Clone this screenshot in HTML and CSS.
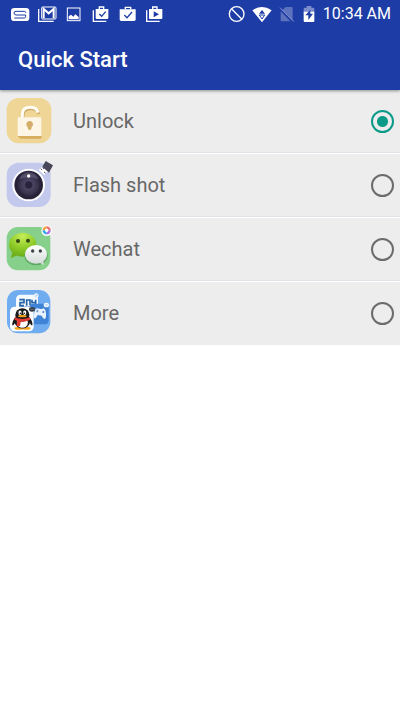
FILE: index.html
```html
<!DOCTYPE html>
<html lang="en">
<head>
    <meta charset="UTF-8">
    <meta name="viewport" content="width=device-width, initial-scale=1.0">
    <title>Quick Start</title>
    <link rel="stylesheet" href="styles.css">
</head>
<body>
    <header class="app-header">
        <!-- Status bar -->
        <div class="status-bar">
            <div class="notifications">
                <svg width="20" height="18" viewBox="0 0 60 54" fill="none">
                    <rect x="3" y="9" width="55" height="39" rx="10" fill="#fff"/>
                    <path d="M47 24v-1q0-4-4-4H18q-6 0-6 5t6 6h29v4q0 5-4 5H13" stroke="#1d3ca6" stroke-width="3"/>
                </svg>
                <svg width="20" height="18" viewBox="0 0 60 54" fill="none" stroke="#fff">
                    <path d="M5 12v37h45" stroke-width="4"/>
                    <rect x="14" y="6" width="43" height="36" rx="3" stroke-width="3"/>
                    <path d="M20 40V12l15 13 15-13v28" stroke-width="6"/>
                </svg>
                <svg width="20" height="18" viewBox="0 0 60 54" fill="none">
                    <rect x="10" y="9" width="38" height="38" stroke="#fff" stroke-width="3"/>
                    <path d="M14 43V34l7-5 7 6 6-7 10 8v7z" fill="#fff"/>
                </svg>
                <svg width="20" height="18" viewBox="0 0 60 54" fill="none">
                    <path d="M7 16v33h39" stroke="#fff" stroke-width="4"/>
                    <path d="M25 13V6h13v7" stroke="#fff" stroke-width="4"/>
                    <path d="M14 12h38v27q0 3-3 3H17q-3 0-3-3z" fill="#fff"/>
                    <path d="M25 27l7 7 12-14" stroke="#1d3ca6" stroke-width="4"/>
                </svg>
                <svg width="20" height="18" viewBox="0 0 60 54" fill="none">
                    <path d="M22 13V7h16v6" stroke="#fff" stroke-width="4"/>
                    <path d="M5 13h48v30q0 5-5 5H10q-5 0-5-5z" fill="#fff"/>
                    <path d="M19 30l8 8 15-17" stroke="#1d3ca6" stroke-width="4"/>
                </svg>
                <svg width="20" height="18" viewBox="0 0 60 54" fill="none">
                    <path d="M5 16v33h39" stroke="#fff" stroke-width="4"/>
                    <path d="M23 13V6h13v7" stroke="#fff" stroke-width="4"/>
                    <path d="M12 12h40v27q0 3-3 3H15q-3 0-3-3z" fill="#fff"/>
                    <path d="M26 19l16 9-16 9z" fill="#1d3ca6"/>
                </svg>
            </div>
            <div class="system">
                <svg width="18" height="18" viewBox="0 0 54 54" fill="none" stroke="#fff" stroke-width="4">
                    <circle cx="29" cy="27" r="22"/>
                    <path d="M14 12l30 30"/>
                </svg>
                <svg width="20" height="18" viewBox="0 0 60 54">
                    <path d="M1 16Q30-4 59 16L30 52z" fill="#fff"/>
                    <path d="M30 15l9 11H21z" fill="#1d3ca6"/>
                    <path d="M22 30h16l-8 12z" fill="#fff" stroke="#1d3ca6" stroke-width="3"/>
                </svg>
                <svg width="16" height="18" viewBox="0 0 48 54">
                    <path d="M5 12l36 37V9q0-3-3-3H20l-9 8zM5 19v27q0 3 3 3h26z" fill="#5d72be"/>
                    <path d="M3 8l42 42" stroke="#8090cc" stroke-width="3"/>
                </svg>
                <svg width="14" height="18" viewBox="0 0 42 54">
                    <path d="M14 3h14v5h6q3 0 3 3v12H5V11q0-3 3-3h6z" fill="#7d8ccb"/>
                    <path d="M5 20h32v28q0 3-3 3H8q-3 0-3-3z" fill="#fff"/>
                    <path d="M25 14L10 31h9v14l14-19h-8z" fill="#1d3ca6"/>
                </svg>
                <span class="clock">10:34 AM</span>
            </div>
        </div>
        <h1 class="title">Quick Start</h1>
    </header>

    <form class="options">
        <label class="option">
            <!-- open padlock -->
            <svg class="option-icon" viewBox="0 0 180 186" aria-hidden="true">
                <rect x="20" y="24" width="134" height="136" rx="36" fill="#efd596"/>
                <path d="M53 138l8 8h62l3-8z" fill="#d7ad60"/>
                <path d="M67 86V72q0-20 25-20 18 0 22 16" fill="none" stroke="#cfab68" stroke-width="9" transform="translate(2 4)"/>
                <path d="M67 86V72q0-20 25-20 18 0 22 16" fill="none" stroke="#fffdf5" stroke-width="9"/>
                <rect x="53" y="82" width="71" height="56" rx="3" fill="#fdf6e6"/>
                <path d="M83 111a10 10 0 1 1 12 0l-2 8h-8z" fill="#d5ad68"/>
            </svg>
            <span class="option-name">Unlock</span>
            <input type="radio" name="action" value="unlock" checked>
        </label>
        <label class="option">
            <!-- camera lens with flash -->
            <svg class="option-icon" viewBox="0 6 180 186" aria-hidden="true">
                <defs>
                    <radialGradient id="lens">
                        <stop offset="0" stop-color="#29243d"/>
                        <stop offset="0.22" stop-color="#29243d"/>
                        <stop offset="0.3" stop-color="#4c4562"/>
                        <stop offset="0.6" stop-color="#3c3550"/>
                        <stop offset="0.85" stop-color="#252034"/>
                        <stop offset="1" stop-color="#2c2740"/>
                    </radialGradient>
                </defs>
                <rect x="20" y="32" width="132" height="133" rx="36" fill="#c3c8ed"/>
                <circle cx="86" cy="99" r="49" fill="#fff"/>
                <circle cx="86" cy="99" r="43" fill="url(#lens)"/>
                <path d="M57 82q8-20 28-21 22 0 31 21-28-13-59 0z" fill="#8a84a4" opacity="0.4"/>
                <circle cx="86" cy="72" r="5" fill="#fff"/>
                <path d="M128 43l17 14-12 12-17-16z" fill="#fff"/>
                <path d="M122 50l4 4m2-8l4 5m0 9l5 4" stroke="#4c4b65" stroke-width="3"/>
                <path d="M137 27l22 13-12 22-20-18z" fill="#48475a"/>
            </svg>
            <span class="option-name">Flash shot</span>
            <input type="radio" name="action" value="flash-shot">
        </label>
        <label class="option">
            <!-- chat bubbles -->
            <svg class="option-icon" viewBox="0 6 180 186" aria-hidden="true">
                <defs>
                    <radialGradient id="green-bubble" cx="0.5" cy="0.15" r="0.9">
                        <stop offset="0" stop-color="#c5ed5a"/>
                        <stop offset="0.55" stop-color="#8ecb27"/>
                        <stop offset="1" stop-color="#67a916"/>
                    </radialGradient>
                    <linearGradient id="white-bubble" x2="0" y2="1">
                        <stop offset="0" stop-color="#fff"/>
                        <stop offset="1" stop-color="#d6dbda"/>
                    </linearGradient>
                </defs>
                <rect x="20" y="33" width="131" height="130" rx="34" fill="#86d08b"/>
                <path d="M37 110l-5 17 20-9z" fill="#6fae1c"/>
                <ellipse cx="68" cy="86" rx="41" ry="36" fill="url(#green-bubble)"/>
                <ellipse cx="108" cy="119" rx="35" ry="29" fill="#5fa863"/>
                <path d="M117 139l15 9-3-17z" fill="#d6dbda"/>
                <ellipse cx="108" cy="115" rx="33" ry="28" fill="url(#white-bubble)"/>
                <circle cx="54" cy="75" r="6" fill="#334616"/>
                <circle cx="84" cy="74" r="6" fill="#334616"/>
                <circle cx="98" cy="105" r="5" fill="#3d4444"/>
                <circle cx="121" cy="105" r="5" fill="#3d4444"/>
                <circle cx="140" cy="44" r="16" fill="#fff"/>
                <g fill="none" stroke-width="7">
                    <path d="M131 43a9 9 0 0 1 9-9" stroke="#f1a33b"/>
                    <path d="M140 34a9 9 0 0 1 9 9" stroke="#ee6a74"/>
                    <path d="M149 43a9 9 0 0 1-9 9" stroke="#b46de0"/>
                    <path d="M140 52a9 9 0 0 1-9-9" stroke="#35a6ee"/>
                </g>
            </svg>
            <span class="option-name">Wechat</span>
            <input type="radio" name="action" value="wechat">
        </label>
        <label class="option">
            <!-- stack of app tiles -->
            <svg class="option-icon" viewBox="0 4 180 186" aria-hidden="true">
                <rect x="21" y="28" width="130" height="130" rx="34" fill="#70adf0"/>
                <rect x="48" y="42" width="66" height="58" rx="13" fill="#f5faff"/>
                <path d="M58 57h14v9H60v9h12m8 0V58h10v16m6-17v9h11v-9m0 9v11H96M58 80h48" fill="none" stroke="#2463a5" stroke-width="5"/>
                <circle cx="109" cy="45" r="7" fill="#eaf5ff"/>
                <path d="M105 48l8-6" stroke="#7caee0" stroke-width="2"/>
                <rect x="88" y="69" width="58" height="62" rx="12" fill="#3e83d5"/>
                <path d="M106 86q5-6 12-2 8 3 13-1 6 3 7 15 1 16-4 17-5 0-9-10l-12-2q-6 12-10 10-5-5 3-27z" fill="#e8f3ff"/>
                <path d="M112 87v8m-4-4h8" stroke="#4c79b6" stroke-width="2"/>
                <circle cx="130" cy="94" r="3" fill="#4c79b6"/>
                <ellipse cx="139" cy="73" rx="8" ry="7" fill="#f1f8ff"/>
                <path d="M135 73h8" stroke="#7caee0" stroke-width="2"/>
                <rect x="30" y="78" width="71" height="74" rx="14" fill="#fff"/>
                <ellipse cx="96" cy="86" rx="9" ry="7" fill="#343b44"/>
                <path d="M91 86h10" stroke="#8a939c" stroke-width="2"/>
                <g transform="translate(-12 -19) scale(1.18 1.13)">
                    <path d="M50 113q-11 12-8 23 3 0 7-8m35-15q11 12 8 23-3 0-7-8" fill="#191919"/>
                    <ellipse cx="58" cy="143" rx="11" ry="4" fill="#f3a51e"/>
                    <ellipse cx="77" cy="143" rx="11" ry="4" fill="#f3a51e"/>
                    <ellipse cx="67" cy="124" rx="20" ry="20" fill="#191919"/>
                    <ellipse cx="67" cy="128" rx="14" ry="14" fill="#fff"/>
                    <ellipse cx="67" cy="108" rx="18" ry="18" fill="#191919"/>
                    <ellipse cx="61" cy="102" rx="4" ry="6" fill="#fff"/>
                    <ellipse cx="73" cy="102" rx="4" ry="6" fill="#fff"/>
                    <circle cx="62" cy="103" r="2" fill="#111"/>
                    <circle cx="72" cy="103" r="2" fill="#111"/>
                    <ellipse cx="67" cy="111" rx="11" ry="3" fill="#f3a51e"/>
                    <path d="M48 114q19 9 38 0l2 6q-13 7-25 6l-2 11h-9l2-13-7-4z" fill="#e23a32"/>
                </g>
            </svg>
            <span class="option-name">More</span>
            <input type="radio" name="action" value="more">
        </label>
    </form>
</body>
</html>
```

FILE: styles.css
```css
* {
    box-sizing: border-box;
}

body {
    margin: 0;
    background-color: #fff;
    font-family: Roboto, "Liberation Sans", sans-serif;
}

.app-header {
    position: relative;
    background-color: #1d3ca6;
    color: #fff;
    box-shadow: 0 1px 3px rgba(0, 0, 0, 0.4);
}

.status-bar {
    display: flex;
    justify-content: space-between;
    align-items: center;
    height: 28px;
    padding: 0 9px 0 10px;
}

.notifications,
.system {
    display: flex;
    align-items: center;
    gap: 7px;
}

.status-bar svg {
    display: block;
}

.clock {
    font-size: 16px;
    line-height: 28px;
}

.title {
    margin: 0;
    padding: 17px 18px 15px;
    font-size: 22px;
    font-weight: 500;
    line-height: 30px;
}

/* Option list */
.options {
    display: flex;
    flex-direction: column;
    gap: 1px;
    background-color: #fff;
}

.option {
    display: flex;
    align-items: center;
    height: 63px;
    padding: 0 6px 1px 0;
    background-color: #ededed;
    box-shadow: inset 0 -1px #e2e3e8;
    cursor: pointer;
}

.option:last-child {
    box-shadow: none;
}

.option-icon {
    flex: none;
    width: 60px;
    height: 62px;
}

.option-name {
    flex: 1;
    padding-left: 13px;
    color: #686868;
    font-size: 20px;
    line-height: 24px;
}

.option input {
    appearance: none;
    flex: none;
    width: 23px;
    height: 23px;
    margin: 0;
    border: 2px solid #6b6b6b;
    border-radius: 50%;
}

.option input:checked {
    border-color: #0b9a88;
    background: radial-gradient(circle, #0b9a88 5px, transparent 6px);
}
```
